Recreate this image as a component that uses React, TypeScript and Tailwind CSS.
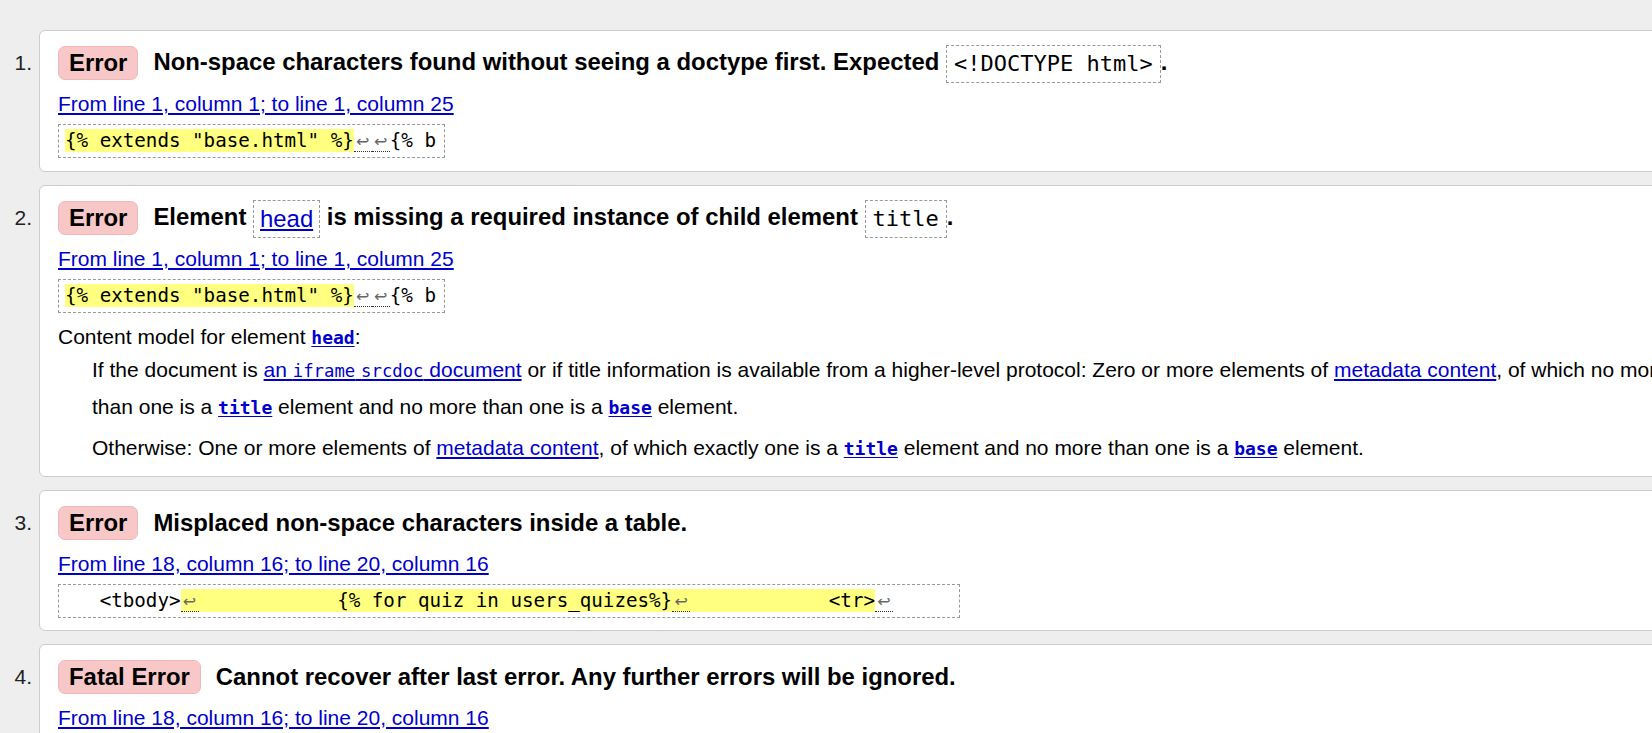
import type { ReactNode } from 'react';

const Lf = () => (
  <span className="inline-block w-[18px] text-center font-['DejaVu_Sans',sans-serif] text-[16px] leading-[18px] text-[#666] border-b border-dotted border-[#333] align-baseline">
    ↩
  </span>
);

const Badge = ({ children }: { children: ReactNode }) => (
  <span className="inline-flex items-center h-[34px] px-[10px] rounded-[7px] bg-[#f8c8c8] border border-[#f1b6b6] font-bold text-[23.9px] shrink-0">
    {children}
  </span>
);

const Code = ({ children }: { children: ReactNode }) => (
  <span className="inline-block align-middle h-[38px] leading-[36px] px-[7px] border border-dashed border-[#999] font-normal font-['DejaVu_Sans_Mono',monospace] text-[22px]">
    {children}
  </span>
);

const Loc = ({ children }: { children: ReactNode }) => (
  <p className="mt-[8px] leading-[27px]">
    <a className="text-[#0000cc] underline underline-offset-2 cursor-pointer">{children}</a>
  </p>
);

const Extract = ({ children }: { children: ReactNode }) => (
  <div className="mt-[7px] leading-none">
    <code className="inline-block border border-dashed border-[#999] py-[2px] pl-[6px] pr-[8px] font-['DejaVu_Sans_Mono',monospace] text-[19.2px] leading-[28px] whitespace-pre text-black">
      {children}
    </code>
  </div>
);

const Hl = ({ children }: { children: ReactNode }) => <span className="bg-[#ffff80]">{children}</span>;

const MonoLink = ({ children }: { children: ReactNode }) => (
  <a className="text-[#0000cc] underline underline-offset-2 font-bold leading-none font-['DejaVu_Sans_Mono',monospace] text-[18px]">{children}</a>
);

const Card = ({
  n,
  badge,
  children,
  title,
  pb = 'pb-[12px]',
}: {
  n: number;
  badge: string;
  title: ReactNode;
  children: ReactNode;
  pb?: string;
}) => (
  <li className="flex items-start">
    <span className="w-[32px] shrink-0 text-right pt-[14px] leading-[38px] text-[21px] text-[#222]">{n}.</span>
    <div className={`ml-[7px] flex-1 bg-white border border-[#cccccc] rounded-[6px] pl-[18px] pt-[13px] ${pb}`}>
      <div className="flex items-center h-[38px]">
        <Badge>{badge}</Badge>
        <span className="ml-[15px] font-bold text-[23.9px] leading-[38px] whitespace-nowrap">{title}</span>
      </div>
      {children}
    </div>
  </li>
);

export default function App() {
  return (
    <div className="w-full h-[733px] overflow-hidden bg-[#eeeeee] font-['Liberation_Sans',Arial,sans-serif] text-[21px] text-black">
      <ol className="w-[1800px] pt-[30px] flex flex-col gap-[13px]">
        <Card
          n={1}
          badge="Error"
          pb="pb-[13px]"
          title={
            <>
              Non-space characters found without seeing a doctype first. Expected <Code>&lt;!DOCTYPE html&gt;</Code>.
            </>
          }
        >
          <Loc>From line 1, column 1; to line 1, column 25</Loc>
          <Extract>
            <Hl>{'{% extends "base.html" %}'}</Hl>
            <Lf />
            <Lf />
            {'{% b'}
          </Extract>
        </Card>

        <Card
          n={2}
          badge="Error"
          pb="pb-[10px]"
          title={
            <>
              Element{' '}
              <span className="inline-block align-middle h-[38px] leading-[36px] px-[6px] border border-dashed border-[#999] font-normal">
                <a className="text-[#0000cc] underline underline-offset-2">head</a>
              </span>{' '}
              is missing a required instance of child element <Code>title</Code>.
            </>
          }
        >
          <Loc>From line 1, column 1; to line 1, column 25</Loc>
          <Extract>
            <Hl>{'{% extends "base.html" %}'}</Hl>
            <Lf />
            <Lf />
            {'{% b'}
          </Extract>
          <p className="mt-[10px] leading-[27px]">
            Content model for element <MonoLink>head</MonoLink>:
          </p>
          <div className="ml-[34px] mt-[1px]">
            <p className="leading-[37px] whitespace-nowrap">
              If the document is{' '}
              <a className="text-[#0000cc] underline underline-offset-2">
                an <span className="leading-none font-['DejaVu_Sans_Mono',monospace] text-[17.3px]">iframe</span>{' '}
                <span className="leading-none font-['DejaVu_Sans_Mono',monospace] text-[17.3px]">srcdoc</span> document
              </a>{' '}
              or if title information is available from a higher-level protocol: Zero or more elements of{' '}
              <a className="text-[#0000cc] underline underline-offset-2">metadata content</a>, of which no more
              <br />
              than one is a <MonoLink>title</MonoLink> element and no more than one is a <MonoLink>base</MonoLink> element.
            </p>
            <p className="mt-[4px] leading-[37px] whitespace-nowrap">
              Otherwise: One or more elements of{' '}
              <a className="text-[#0000cc] underline underline-offset-2">metadata content</a>, of which exactly one is a{' '}
              <MonoLink>title</MonoLink> element and no more than one is a <MonoLink>base</MonoLink> element.
            </p>
          </div>
        </Card>

        <Card n={3} badge="Error" title="Misplaced non-space characters inside a table.">
          <Loc>From line 18, column 16; to line 20, column 16</Loc>
          <Extract>
            {'   <tbody>'}
            <Hl>
              <Lf />
              {'            {% for quiz in users_quizes%}'}
              <Lf />
              {'            <tr>'}
            </Hl>
            <Lf />
            {'     '}
          </Extract>
        </Card>

        <Card n={4} badge="Fatal Error" title="Cannot recover after last error. Any further errors will be ignored.">
          <Loc>From line 18, column 16; to line 20, column 16</Loc>
          <Extract>
            {'   <tbody>'}
            <Hl>
              <Lf />
              {'            {% for quiz in users_quizes%}'}
              <Lf />
              {'            <tr>'}
            </Hl>
            <Lf />
            {'     '}
          </Extract>
        </Card>
      </ol>
    </div>
  );
}
